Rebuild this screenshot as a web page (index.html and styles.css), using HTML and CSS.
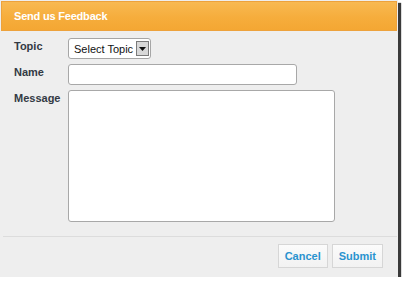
FILE: index.html
```html
<!DOCTYPE html>
<html lang="en">
<head>
    <meta charset="UTF-8">
    <title>Send us Feedback</title>
    <link rel="stylesheet" href="styles.css">
</head>
<body>
    <div class="dialog">
        <div class="dialog-header">Send us Feedback</div>

        <form class="feedback-form">
            <label class="field-label" for="topic">Topic</label>
            <div class="select-box" id="topic">
                <span class="select-text">Select Topic</span>
                <span class="select-arrow">
                    <svg width="7" height="4" viewBox="0 0 7 4"><path d="M0 0h7L3.5 4z" fill="#111"/></svg>
                </span>
            </div>

            <label class="field-label" for="name">Name</label>
            <input type="text" id="name" class="text-input name-input">

            <label class="field-label" for="message">Message</label>
            <textarea id="message" class="text-input message-input"></textarea>
        </form>

        <div class="dialog-footer">
            <button class="btn">Cancel</button>
            <button class="btn">Submit</button>
        </div>
    </div>
</body>
</html>
```

FILE: styles.css
```css
/* General Reset */
* {
    margin: 0;
    padding: 0;
    box-sizing: border-box;
    font-family: "Liberation Sans", Arial, sans-serif;
}

body {
    background: #ffffff;
}

/* Dialog */
.dialog {
    width: 398px;
    height: 277px;
    background: #eeeeee;
    display: flex;
    flex-direction: column;
    box-shadow: 3px 3px 1px #3a3a3a;
}

.dialog-header {
    margin: 1px 1px 0 1px;
    height: 30px;
    padding: 7px 0 0 12px;
    border: 1px solid #eda23c;
    background: linear-gradient(#f8b952, #f6ad3c 55%, #f4a733);
    color: #ffffff;
    font-size: 11px;
    font-weight: bold;
    letter-spacing: -0.2px;
    line-height: 14px;
}

/* Form */
.feedback-form {
    display: grid;
    grid-template-columns: 54px auto;
    justify-items: start;
    align-items: start;
    row-gap: 5px;
    padding: 7px 0 0 14px;
}

.field-label {
    font-size: 11px;
    font-weight: bold;
    color: #333a44;
    padding-top: 2px;
}

.select-box {
    width: 83px;
    height: 21px;
    display: flex;
    align-items: center;
    justify-content: space-between;
    padding: 0 1px 0 5px;
    background: #ffffff;
    border: 1px solid #a6a6a6;
    border-radius: 3px;
    font-size: 11px;
    color: #111;
}

.select-text {
    white-space: nowrap;
}

.select-arrow {
    width: 13px;
    height: 15px;
    flex-shrink: 0;
    display: flex;
    align-items: center;
    justify-content: center;
    background: #d8d8d8;
    border: 1px solid #7a7a7a;
}

.text-input {
    background: #ffffff;
    border: 1px solid #a8a8a8;
    border-radius: 3px;
    resize: none;
}

.name-input {
    width: 229px;
    height: 21px;
}

.message-input {
    width: 267px;
    height: 132px;
}

/* Footer */
.dialog-footer {
    margin: 14px 1px 0 3px;
    border-top: 1px solid #dcdcdc;
    display: flex;
    justify-content: flex-end;
    gap: 4px;
    padding: 7px 14px 0 0;
}

.btn {
    height: 24px;
    padding: 0 6px;
    background: linear-gradient(#fbfbfb, #f2f2f2);
    border: 1px solid #d6d6d6;
    color: #2a93cf;
    font-size: 11px;
    font-weight: bold;
}
```
